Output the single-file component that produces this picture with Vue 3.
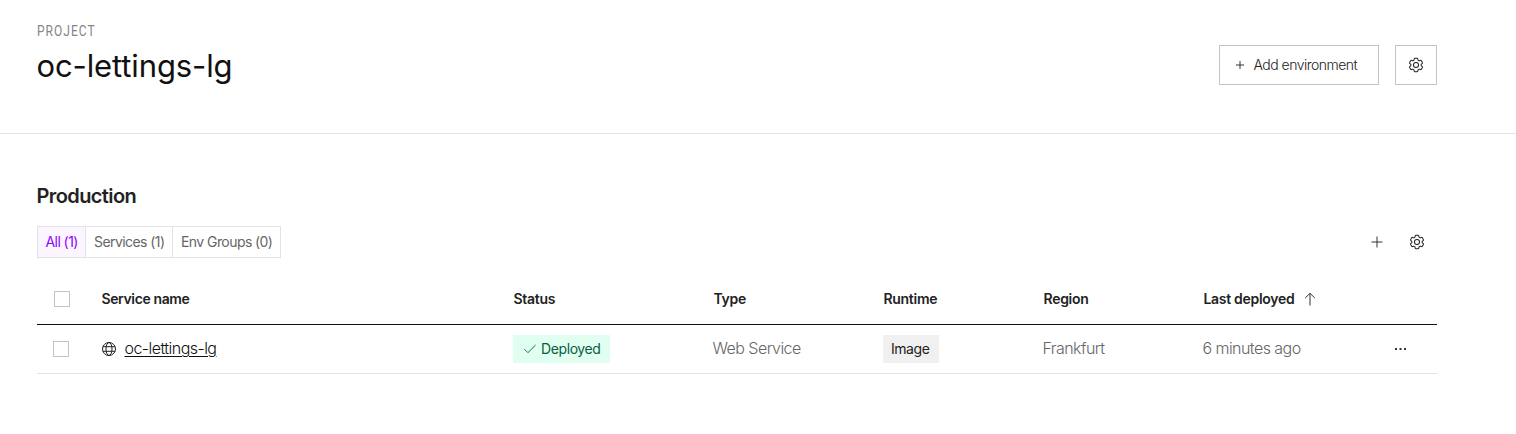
<script setup>
const gear = 'M9.594 3.94c.09-.542.56-.94 1.11-.94h2.593c.55 0 1.02.398 1.11.94l.213 1.281c.063.374.313.686.645.87.074.04.147.083.22.127.325.196.72.257 1.075.124l1.217-.456a1.125 1.125 0 0 1 1.37.49l1.296 2.247a1.125 1.125 0 0 1-.26 1.431l-1.003.827c-.293.241-.438.613-.43.992a7.723 7.723 0 0 1 0 .255c-.008.378.137.75.43.991l1.004.827c.424.35.534.955.26 1.43l-1.298 2.247a1.125 1.125 0 0 1-1.369.491l-1.217-.456c-.355-.133-.75-.072-1.076.124a6.47 6.47 0 0 1-.22.128c-.331.183-.581.495-.644.869l-.213 1.281c-.09.543-.56.94-1.11.94h-2.594c-.55 0-1.019-.398-1.11-.94l-.213-1.281c-.062-.374-.312-.686-.644-.87a6.52 6.52 0 0 1-.22-.127c-.325-.196-.72-.257-1.076-.124l-1.217.456a1.125 1.125 0 0 1-1.369-.49l-1.297-2.247a1.125 1.125 0 0 1 .26-1.431l1.004-.827c.292-.24.437-.613.43-.991a6.932 6.932 0 0 1 0-.255c.007-.38-.138-.751-.43-.992l-1.004-.827a1.125 1.125 0 0 1-.26-1.43l1.297-2.247a1.125 1.125 0 0 1 1.37-.491l1.216.456c.356.133.751.072 1.076-.124.072-.044.146-.086.22-.128.332-.183.582-.495.644-.869l.214-1.28Z'
</script>

<template>
  <div class="page">
    <header class="header">
      <div class="heading">
        <span class="eyebrow">PROJECT</span>
        <h1>oc-lettings-lg</h1>
      </div>
      <div class="actions">
        <button class="add">
          <svg width="8" height="8" viewBox="0 0 8 8"><path d="M4 0v8M0 4h8" /></svg>
          <span class="add-label">Add environment</span>
        </button>
        <button class="square">
          <svg width="18" height="18" viewBox="0 0 24 24" class="gear"><path :d="gear" /><circle cx="12" cy="12" r="3.4" /></svg>
        </button>
      </div>
    </header>

    <main>
      <h2>Production</h2>
      <div class="toolbar">
        <div class="tabs">
          <button class="tab t1 active">All (1)</button>
          <button class="tab t2">Services (1)</button>
          <button class="tab t3">Env Groups (0)</button>
        </div>
        <div class="tools">
          <svg width="12" height="12" viewBox="0 0 12 12"><path d="M6 .5v11M.5 6h11" /></svg>
          <svg width="18" height="18" viewBox="0 0 24 24" class="gear"><path :d="gear" /><circle cx="12" cy="12" r="3.4" /></svg>
        </div>
      </div>

      <div class="table">
        <div class="row head">
          <div><i class="box"></i></div>
          <div class="wide">Service name</div>
          <div>Status</div>
          <div>Type</div>
          <div>Runtime</div>
          <div>Region</div>
          <div class="sort">
            <span>Last deployed</span>
            <svg width="12" height="14" viewBox="0 0 12 14"><path d="M6 13.5V1.5M1.2 6 6 1.3 10.8 6" /></svg>
          </div>
          <div></div>
        </div>
        <div class="row body">
          <div><i class="box"></i></div>
          <div class="name">
            <svg width="14" height="14" viewBox="0 0 14 14" class="globe"><circle cx="7" cy="7" r="6.5" /><ellipse cx="7" cy="7" rx="3" ry="6.5" /><path d="M1 4.7h12M1 9.3h12" /></svg>
            <a class="link">oc-lettings-lg</a>
          </div>
          <div>
            <span class="badge ok">
              <svg width="12" height="10" viewBox="0 0 12 10"><path d="M.4 5.2 3.9 8.7 11.6 1" /></svg>
              <span>Deployed</span>
            </span>
          </div>
          <div class="val">Web Service</div>
          <div><span class="badge img">Image</span></div>
          <div class="val">Frankfurt</div>
          <div class="val">6 minutes ago</div>
          <div>
            <svg width="11" height="2" viewBox="0 0 11 2" class="dots"><path d="M0 1h2M4.5 1h2M9 1h2" /></svg>
          </div>
        </div>
      </div>
    </main>
  </div>
</template>

<style>
body { background: #fff; }
</style>

<style scoped>
.page {
  height: 434px;
  box-sizing: border-box;
  overflow: hidden;
  font-family: Inter, "Liberation Sans", sans-serif;
  font-size: 14px;
  line-height: 20px;
  color: #222;
  white-space: nowrap;
}
svg { display: block; flex: none; fill: none; stroke: #333; stroke-width: 1; }
.gear { stroke: #222; stroke-width: 1.35; }
.globe { stroke: #222; }
button { font: inherit; color: inherit; background: #fff; padding: 0; margin: 0; border-radius: 0; box-sizing: border-box; }
h1, h2 { margin: 0; }

.header {
  height: 134px;
  box-sizing: border-box;
  border-bottom: 1px solid #e3e3e3;
  padding: 21px 79px 0 37px;
  display: flex;
  justify-content: space-between;
}
.heading { display: flex; flex-direction: column; align-items: flex-start; }
.eyebrow { font-family: Roboto, sans-serif; font-weight: 400; font-size: 15px; color: #858585; letter-spacing: 1.3px; transform: scaleX(.8); transform-origin: 0 50%; }
h1 { font-size: 31px; line-height: 40px; font-weight: 400; color: #111; margin-top: 5px; letter-spacing: -.12px; margin-left: -.5px; }
.actions { display: flex; gap: 16px; padding-top: 24px; }
.add { width: 160px; height: 40px; border: 1px solid #c4c4c4; display: flex; align-items: center; padding-left: 16px; gap: 9.5px; }
.square { width: 42px; height: 40px; border: 1px solid #c4c4c4; display: flex; align-items: center; justify-content: center; }
.add-label { font-weight: 350; letter-spacing: -.52px; }

main { padding: 48px 79px 0 37px; }
h2 { font-size: 20px; line-height: 28px; font-weight: 600; letter-spacing: -.6px; margin-left: -.5px; }
.toolbar { display: flex; justify-content: space-between; align-items: center; margin-top: 16px; height: 32px; }
.tabs { display: flex; height: 32px; }
.tab { border: 1px solid #e3e3e3; color: #666; padding-left: 8px; text-align: left; letter-spacing: -.57px; }
.tab + .tab { border-left: 0; }
.t1 { width: 49px; }
.t2 { width: 87px; }
.t3 { width: 108px; }
.tab.active { color: #8a05ff; background: #faf5ff; padding-left: 7.5px; }
.tools { display: flex; align-items: center; gap: 25px; padding-right: 11px; }

.table { margin-top: 16px; }
.row { display: grid; grid-template-columns: 64px 412px 200px 170px 160px 160px 192px 42px; align-items: center; box-sizing: border-box; }
.head { height: 51px; border-bottom: 1px solid #111; font-weight: 600; letter-spacing: -.3px; }
.head > div + div { padding-left: .5px; }
.wide { letter-spacing: -.38px; }
.body { height: 49px; border-bottom: 1px solid #e3e3e3; }
.box { display: block; box-sizing: border-box; width: 16px; height: 16px; border: 1px solid #c4c4c4; margin-left: 17px; }
.body .box { margin-left: 16px; }
.sort { display: flex; align-items: center; gap: 9.5px; }
.name { display: flex; align-items: center; gap: 8.5px; padding-left: 1px; }
.link { font-size: 16px; font-weight: 350; color: #111; letter-spacing: -.54px; text-decoration: underline; text-underline-offset: 2px; text-decoration-thickness: 1px; margin-top: -2px; }
.badge { height: 28px; display: inline-flex; align-items: center; box-sizing: border-box; vertical-align: middle; }
.ok { width: 97px; background: #e0fff0; color: #0b5c45; padding-left: 11px; gap: 5px; letter-spacing: -.4px; }
.ok svg { stroke: #0b7a55; }
.img { width: 56px; background: #f0f0f0; padding-left: 8px; letter-spacing: -.45px; }
.val { font-size: 16px; font-weight: 350; color: #666; letter-spacing: -.55px; margin: -2px 0 0 -.5px; }
.dots { stroke-width: 2; }
</style>
